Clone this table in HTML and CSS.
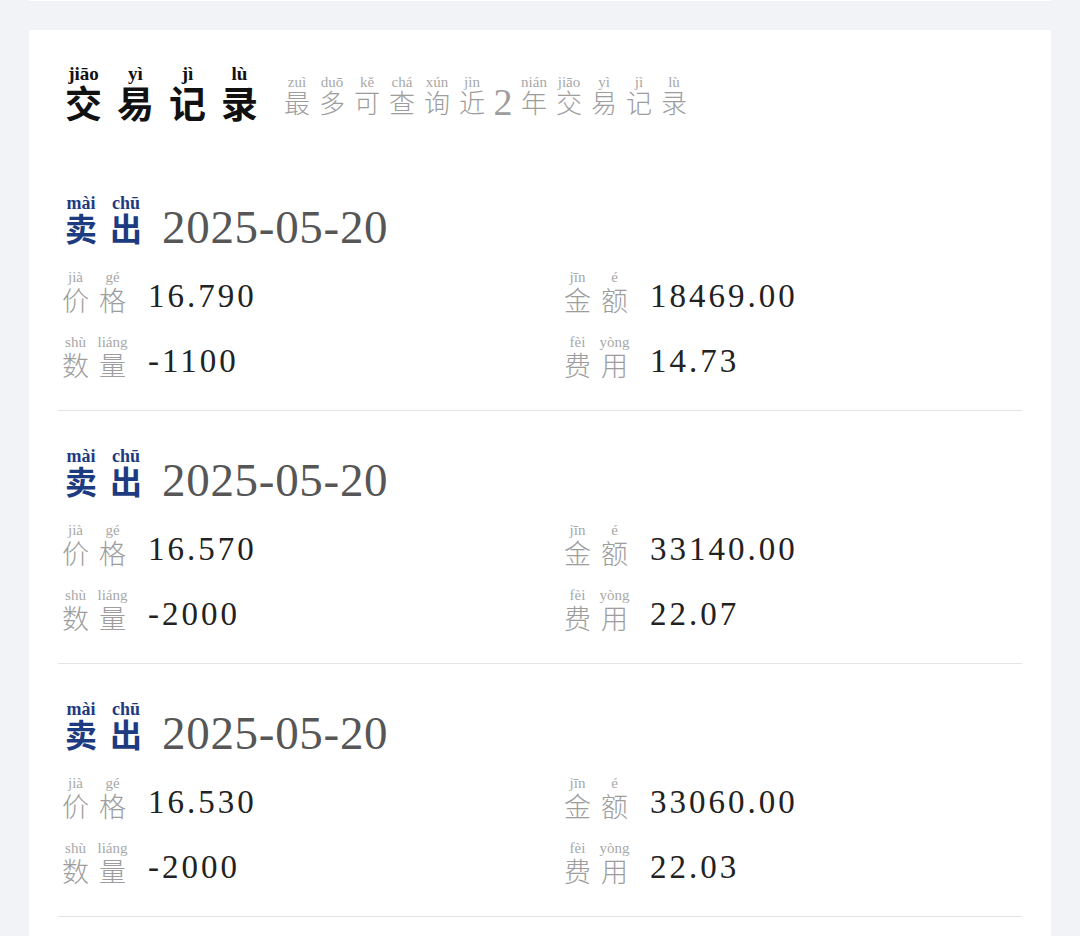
FILE: index.html
```html
<!DOCTYPE html>
<html lang="zh-CN">
<head>
<meta charset="utf-8">
<title>交易记录</title>
<link rel="stylesheet" href="styles.css">
</head>
<body>
<div class="prev-card"></div>
<main class="card">
  <header class="title-row">
    <h1 class="title">
      <span class="u"><span class="py">jiāo</span><span class="hz">交</span></span>
      <span class="u"><span class="py">yì</span><span class="hz">易</span></span>
      <span class="u"><span class="py">jì</span><span class="hz">记</span></span>
      <span class="u"><span class="py">lù</span><span class="hz">录</span></span>
    </h1>
    <p class="subtitle">
      <span class="u"><span class="py">zuì</span><span class="hz">最</span></span>
      <span class="u"><span class="py">duō</span><span class="hz">多</span></span>
      <span class="u"><span class="py">kě</span><span class="hz">可</span></span>
      <span class="u"><span class="py">chá</span><span class="hz">查</span></span>
      <span class="u"><span class="py">xún</span><span class="hz">询</span></span>
      <span class="u"><span class="py">jìn</span><span class="hz">近</span></span>
      <span class="u num"><span class="py"></span><span class="hz">2</span></span>
      <span class="u"><span class="py">nián</span><span class="hz">年</span></span>
      <span class="u"><span class="py">jiāo</span><span class="hz">交</span></span>
      <span class="u"><span class="py">yì</span><span class="hz">易</span></span>
      <span class="u"><span class="py">jì</span><span class="hz">记</span></span>
      <span class="u"><span class="py">lù</span><span class="hz">录</span></span>
    </p>
  </header>

  <section class="trade">
    <div class="trade-head">
      <span class="side">
        <span class="u"><span class="py">mài</span><span class="hz">卖</span></span>
        <span class="u"><span class="py">chū</span><span class="hz">出</span></span>
      </span>
      <span class="date">2025-05-20</span>
    </div>
    <div class="fields">
      <div class="field">
        <span class="label"><span class="u"><span class="py">jià</span><span class="hz">价</span></span><span class="u"><span class="py">gé</span><span class="hz">格</span></span></span>
        <span class="value">16.790</span>
      </div>
      <div class="field">
        <span class="label"><span class="u"><span class="py">jīn</span><span class="hz">金</span></span><span class="u"><span class="py">é</span><span class="hz">额</span></span></span>
        <span class="value">18469.00</span>
      </div>
      <div class="field">
        <span class="label"><span class="u"><span class="py">shù</span><span class="hz">数</span></span><span class="u"><span class="py">liáng</span><span class="hz">量</span></span></span>
        <span class="value">-1100</span>
      </div>
      <div class="field">
        <span class="label"><span class="u"><span class="py">fèi</span><span class="hz">费</span></span><span class="u"><span class="py">yòng</span><span class="hz">用</span></span></span>
        <span class="value">14.73</span>
      </div>
    </div>
  </section>

  <section class="trade">
    <div class="trade-head">
      <span class="side">
        <span class="u"><span class="py">mài</span><span class="hz">卖</span></span>
        <span class="u"><span class="py">chū</span><span class="hz">出</span></span>
      </span>
      <span class="date">2025-05-20</span>
    </div>
    <div class="fields">
      <div class="field">
        <span class="label"><span class="u"><span class="py">jià</span><span class="hz">价</span></span><span class="u"><span class="py">gé</span><span class="hz">格</span></span></span>
        <span class="value">16.570</span>
      </div>
      <div class="field">
        <span class="label"><span class="u"><span class="py">jīn</span><span class="hz">金</span></span><span class="u"><span class="py">é</span><span class="hz">额</span></span></span>
        <span class="value">33140.00</span>
      </div>
      <div class="field">
        <span class="label"><span class="u"><span class="py">shù</span><span class="hz">数</span></span><span class="u"><span class="py">liáng</span><span class="hz">量</span></span></span>
        <span class="value">-2000</span>
      </div>
      <div class="field">
        <span class="label"><span class="u"><span class="py">fèi</span><span class="hz">费</span></span><span class="u"><span class="py">yòng</span><span class="hz">用</span></span></span>
        <span class="value">22.07</span>
      </div>
    </div>
  </section>

  <section class="trade">
    <div class="trade-head">
      <span class="side">
        <span class="u"><span class="py">mài</span><span class="hz">卖</span></span>
        <span class="u"><span class="py">chū</span><span class="hz">出</span></span>
      </span>
      <span class="date">2025-05-20</span>
    </div>
    <div class="fields">
      <div class="field">
        <span class="label"><span class="u"><span class="py">jià</span><span class="hz">价</span></span><span class="u"><span class="py">gé</span><span class="hz">格</span></span></span>
        <span class="value">16.530</span>
      </div>
      <div class="field">
        <span class="label"><span class="u"><span class="py">jīn</span><span class="hz">金</span></span><span class="u"><span class="py">é</span><span class="hz">额</span></span></span>
        <span class="value">33060.00</span>
      </div>
      <div class="field">
        <span class="label"><span class="u"><span class="py">shù</span><span class="hz">数</span></span><span class="u"><span class="py">liáng</span><span class="hz">量</span></span></span>
        <span class="value">-2000</span>
      </div>
      <div class="field">
        <span class="label"><span class="u"><span class="py">fèi</span><span class="hz">费</span></span><span class="u"><span class="py">yòng</span><span class="hz">用</span></span></span>
        <span class="value">22.03</span>
      </div>
    </div>
  </section>
</main>
</body>
</html>
```

FILE: styles.css
```css
html, body {
  margin: 0;
  padding: 0;
  background: #f2f3f7;
}
body {
  font-family: "Noto Sans CJK SC", "Noto Sans", sans-serif;
  overflow: hidden;
  height: 936px;
}

.prev-card {
  margin: 0 29px;
  height: 1px;
  background: #ffffff;
}

.card {
  margin: 29px 29px 0;
  background: #ffffff;
  padding: 34px 29px 0;
  min-height: 900px;
}

/* a single annotated character: pinyin above, hanzi below */
.u {
  display: inline-flex;
  flex-direction: column;
  align-items: center;
  flex: none;
}
.py {
  font-family: "Liberation Serif", "DejaVu Serif", serif;
  white-space: nowrap;
}
.hz {
  font-family: "Noto Sans CJK SC", sans-serif;
}

/* title */
.title-row {
  display: flex;
  align-items: flex-end;
  padding-left: 7px;
  margin-bottom: 38px;
}
.title {
  margin: 0;
  display: flex;
  gap: 15px;
}
.title .u { width: 37px; }
.title .py {
  font-size: 19px;
  line-height: 20px;
  font-weight: 700;
  color: #111;
}
.title .hz {
  font-size: 37px;
  line-height: 36px;
  font-weight: 700;
  color: #111;
}

.subtitle {
  margin: 0 0 5px 26px;
  display: flex;
  gap: 9px;
}
.subtitle .u { width: 26px; }
.subtitle .u.num { width: 18px; }
.subtitle .py {
  font-size: 15px;
  line-height: 14px;
  height: 14px;
  color: #a8a8a8;
}
.subtitle .hz {
  font-size: 26px;
  line-height: 26px;
  font-weight: 300;
  color: #9d9d9d;
}
.subtitle .num .hz {
  font-family: "Liberation Serif", serif;
  font-size: 38px;
  line-height: 26px;
}

/* trade block */
.trade {
  padding: 37px 0 32px;
  border-bottom: 1px solid #e4e4e4;
}
.trade-head {
  display: flex;
  align-items: flex-end;
  padding-left: 7px;
}
.side {
  display: flex;
  gap: 13px;
}
.side .u { width: 32px; }
.side .py {
  font-size: 18px;
  line-height: 16px;
  font-weight: 700;
  color: #1d3b80;
}
.side .hz {
  font-size: 32px;
  line-height: 32px;
  font-weight: 700;
  color: #1d3b80;
}
.date {
  margin-left: 20px;
  font-family: "Liberation Serif", serif;
  font-size: 47px;
  line-height: 32px;
  letter-spacing: 0.7px;
  color: #565656;
}

.fields {
  margin-top: 26px;
  padding-left: 4px;
  display: grid;
  grid-template-columns: 502px 1fr;
  row-gap: 21px;
}
.field {
  display: flex;
  align-items: flex-end;
}
.label {
  display: flex;
  gap: 10px;
}
.label .u { width: 27px; }
.label .py {
  font-size: 15px;
  line-height: 17px;
  color: #a8a8a8;
}
.label .hz {
  font-size: 27px;
  line-height: 27px;
  font-weight: 300;
  color: #9d9d9d;
}
.value {
  margin-left: 22px;
  padding-bottom: 4px;
  font-family: "Liberation Serif", serif;
  font-size: 33px;
  line-height: 26px;
  letter-spacing: 3px;
  color: #222;
}
```
